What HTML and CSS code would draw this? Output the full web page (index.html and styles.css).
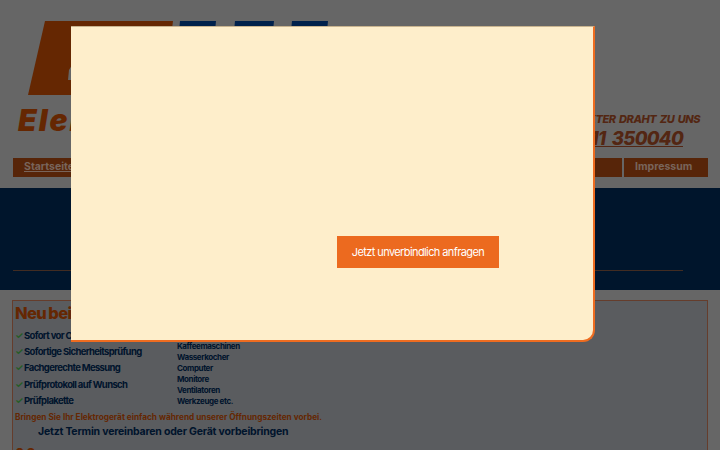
FILE: index.html
```html
<!DOCTYPE html>
<html lang="de">

<head>
    <meta charset="UTF-8">
    <meta name="viewport" content="width=device-width, initial-scale=1.0">
    <title>Elektro E-Check</title>
    <link rel="stylesheet" href="styles.css">
</head>

<body>

    <header class="site-header">
        <div class="brand">
            <svg class="brand-logo" width="310" height="76" viewBox="0 0 310 76">
                <polygon class="logo-orange" points="17,0 145,0 136,74 0,74"/>
                <polygon class="logo-notch" points="41,49 44,44 44,59 40,59"/>
                <polygon class="logo-blue" points="152,0 188,0 186,20 150,20"/>
                <polygon class="logo-blue" points="207,0 246,0 244,20 205,20"/>
                <polygon class="logo-blue" points="264,0 300,0 298,20 262,20"/>
            </svg>
            <div class="brand-name">Elektro Service</div>
        </div>
        <div class="contact">
            <div class="contact-label">DIREKTER DRAHT ZU UNS</div>
            <a class="contact-phone" href="#">0711 350040</a>
        </div>
    </header>

    <nav class="main-nav">
        <a class="nav-item nav-home" href="#">Startseite</a>
        <a class="nav-item nav-fill" href="#">Leistungen</a>
        <a class="nav-item nav-other" href="#">Weitere</a>
        <a class="nav-item nav-imprint" href="#">Impressum</a>
    </nav>

    <section class="hero">
        <div class="hero-line"></div>
    </section>

    <section class="info-box">
        <h2 class="info-title">Neu bei uns: der Geräte-Check</h2>
        <div class="info-columns">
            <ul class="check-list">
                <li><span class="tick">✓</span>Sofort vor Ort</li>
                <li><span class="tick">✓</span>Sofortige Sicherheitsprüfung</li>
                <li><span class="tick">✓</span>Fachgerechte Messung</li>
                <li><span class="tick">✓</span>Prüfprotokoll auf Wunsch</li>
                <li><span class="tick">✓</span>Prüfplakette</li>
            </ul>
            <ul class="device-list">
                <li>Kaffeemaschinen</li>
                <li>Wasserkocher</li>
                <li>Computer</li>
                <li>Monitore</li>
                <li>Ventilatoren</li>
                <li>Werkzeuge etc.</li>
            </ul>
        </div>
        <p class="info-note">Bringen Sie Ihr Elektrogerät einfach während unserer Öffnungszeiten vorbei.</p>
        <p class="info-cta">Jetzt Termin vereinbaren oder Gerät vorbeibringen</p>
        <h2 class="info-next">02</h2>
    </section>

    <div class="overlay">
        <div class="modal">
            <a class="modal-button" href="#">Jetzt unverbindlich anfragen</a>
        </div>
    </div>

</body>

</html>
```

FILE: styles.css
```css
html, body {
    height: 450px;
    overflow: hidden;
}

body {
    margin: 0;
    background-color: #aaaaaa;
    font-family: Inter, "Liberation Sans", sans-serif;
}

ul {
    list-style-type: none;
    margin: 0;
    padding: 0;
}

.site-header {
    display: flex;
    justify-content: space-between;
    height: 158px;
    box-sizing: border-box;
    padding: 21px 20px 0 18px;
}

.brand-logo {
    display: block;
    margin-left: 10px;
}

.logo-orange {
    fill: #a84204;
}

.logo-notch {
    fill: #aaaaaa;
}

.logo-blue {
    fill: #00377f;
}

.brand-name {
    margin-top: 5px;
    font-size: 30px;
    line-height: 36px;
    font-weight: 900;
    font-style: italic;
    letter-spacing: 2px;
    color: #a84204;
}

.contact {
    display: flex;
    flex-direction: column;
    align-items: flex-end;
    padding-top: 91px;
    font-style: italic;
    font-weight: 800;
    color: #8a4020;
}

.contact-label {
    font-size: 11px;
    line-height: 14px;
    letter-spacing: -0.45px;
    word-spacing: 1.5px;
}

.contact-phone {
    margin-right: 17px;
    font-size: 18.5px;
    line-height: 24px;
    letter-spacing: -0.7px;
    word-spacing: 3px;
    color: #8a4020;
}

.main-nav {
    display: flex;
    gap: 2px;
    height: 19px;
    margin: 0 12px 0 13px;
}

.nav-item {
    display: block;
    box-sizing: border-box;
    padding-left: 11px;
    font-size: 10.5px;
    line-height: 18px;
    font-weight: 700;
    background-color: #923e10;
    color: #c8a898;
    text-decoration: none;
}

.nav-home {
    width: 120px;
    text-decoration: underline;
}

.nav-fill {
    flex: 1;
}

.nav-other {
    width: 100px;
}

.nav-imprint {
    width: 84px;
}

.hero {
    height: 102px;
    margin-top: 11px;
    padding: 82px 37px 0 13px;
    box-sizing: border-box;
    background-color: #00234a;
}

.hero-line {
    height: 1px;
    background-color: #6e4a3a;
}

.info-box {
    height: 200px;
    margin: 10px 12px 0;
    padding: 1px 2px;
    border: 1px solid #a8674a;
    background-color: #96999e;
    background-clip: padding-box;
}

.info-title {
    margin: 0;
    font-size: 16.5px;
    line-height: 22px;
    font-weight: 800;
    letter-spacing: -0.6px;
    word-spacing: -1px;
    color: #a84204;
}

.info-columns {
    display: flex;
    height: 84px;
    margin-top: 4px;
}

.check-list {
    width: 162px;
    font-size: 9.5px;
    line-height: 16.2px;
    font-weight: 700;
    letter-spacing: -0.65px;
    color: #00234a;
}

.tick {
    display: inline-block;
    width: 9px;
    color: #3f9a3f;
}

.device-list {
    padding-top: 13px;
    font-size: 8px;
    line-height: 10.9px;
    font-weight: 700;
    letter-spacing: -0.4px;
    color: #00234a;
}

.info-note {
    margin: -1px 0 0;
    font-size: 8.24px;
    line-height: 12px;
    font-weight: 700;
    color: #a84204;
}

.info-cta {
    margin: 1px 0 0 23px;
    font-size: 10.5px;
    line-height: 16px;
    font-weight: 700;
    letter-spacing: -0.2px;
    color: #00234a;
}

.info-next {
    margin: 4px 0 0;
    font-size: 14px;
    line-height: 20px;
    letter-spacing: 2px;
    color: #a84204;
}

/* popup over the page */
.overlay {
    position: fixed;
    top: 0;
    left: 0;
    width: 100%;
    height: 100%;
    background-color: rgba(0, 0, 0, 0.4);
}

.modal {
    position: absolute;
    top: 26px;
    left: 71px;
    width: 524px;
    height: 316px;
    box-sizing: border-box;
    padding: 209px 0 0 266px;
    border-top: 1px solid #c9b48f;
    border-right: 2px solid #ee6c20;
    border-bottom: 2px solid #ee6c20;
    border-radius: 0 0 12px 0;
    background-color: #feeecb;
}

.modal-button {
    display: block;
    width: 162px;
    height: 32px;
    font-size: 11px;
    line-height: 32px;
    letter-spacing: -0.6px;
    text-align: center;
    text-decoration: none;
    background-color: #ec6a1f;
    color: #ffffff;
}
```
